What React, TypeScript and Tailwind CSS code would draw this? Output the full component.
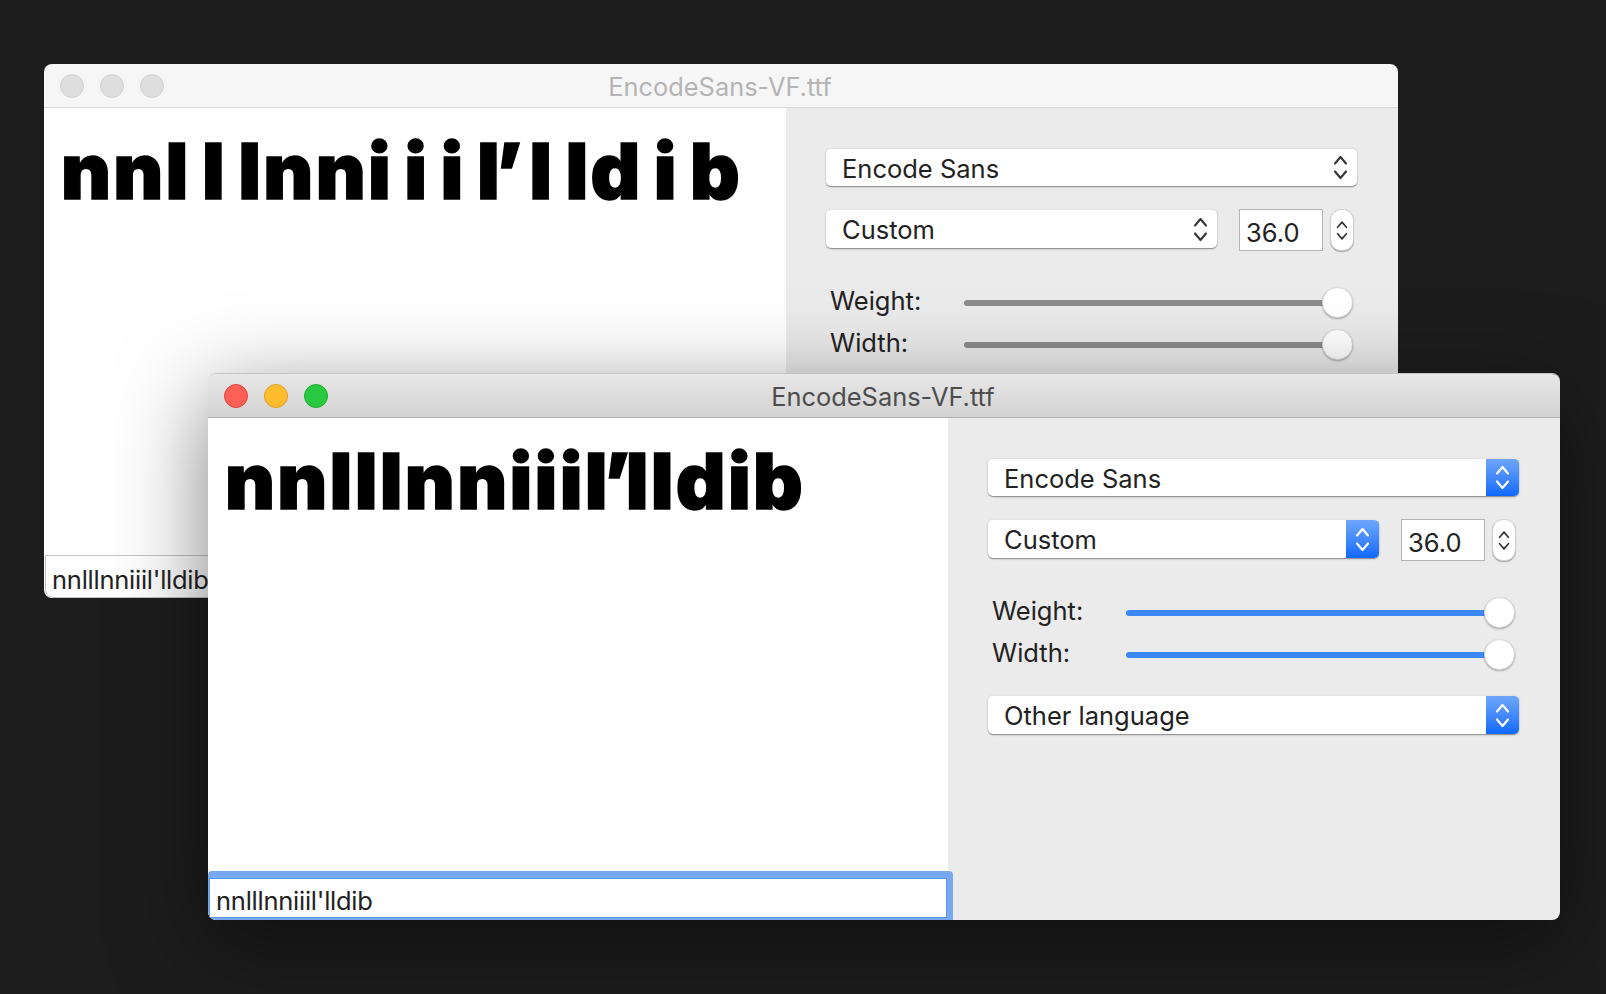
const uiFont = "font-['Inter','Liberation_Sans',sans-serif]";
const bigText = "pl-[17px] pt-[17px] text-[77px] leading-[92px] font-black text-black whitespace-nowrap tracking-[2.3px] [-webkit-text-stroke:1.5px_black]";

function UpDown({ color, size = "w-[15px] h-[27px]" }: { color: string; size?: string }) {
  return (
    <svg viewBox="0 0 15 27" className={size} fill="none" stroke={color} strokeWidth="2.2" strokeLinecap="round" strokeLinejoin="round">
      <path d="M2 9.5 L7.5 3 L13 9.5" />
      <path d="M2 17.5 L7.5 24 L13 17.5" />
    </svg>
  );
}

function Popup({ label, width, height, active }: { label: string; width: string; height: string; active: boolean }) {
  return (
    <div className={`${width} ${height} flex items-stretch bg-white rounded-[5px] overflow-hidden border-t border-t-[#e4e4e4] shadow-[0_1px_1.5px_rgba(0,0,0,0.45)]`}>
      <span className="flex-1 pl-4 pt-[2px] text-[25.5px] leading-[36px] text-[#222]">{label}</span>
      {active ? (
        <span className="w-[33px] flex items-center justify-center bg-gradient-to-b from-[#6fa6fb] to-[#0a68fe]">
          <UpDown color="#ffffff" />
        </span>
      ) : (
        <span className="w-[33px] flex items-center justify-center">
          <UpDown color="#3a3a3a" />
        </span>
      )}
    </div>
  );
}

function Slider({ label, active }: { label: string; active: boolean }) {
  return (
    <div className="flex items-center h-[31px]">
      <span className="w-[138px] pl-[4px] pb-[4px] text-[25.5px] leading-[27px] text-[#222]">{label}</span>
      <div className="relative flex-1 h-[31px] flex items-center">
        <div className={`w-full h-[6px] rounded-full ${active ? "bg-[#3b87f5]" : "bg-[#8c8c8c]"}`} />
        <div className="absolute right-0 top-0 w-[31px] h-[31px] rounded-full bg-white border border-[#dcdcdc] shadow-[0_1px_2px_rgba(0,0,0,0.3)]" />
      </div>
    </div>
  );
}

function Controls({ active, showLanguage }: { active: boolean; showLanguage: boolean }) {
  return (
    <div className="w-[612px] shrink-0 bg-[#ebebeb] pl-10 pt-[40px]">
      <Popup label="Encode Sans" width="w-[531px]" height="h-[38px]" active={active} />
      <div className="flex items-start mt-[23px]">
        <Popup label="Custom" width="w-[391px]" height="h-[39px]" active={active} />
        <div className="ml-[22px] w-[84px] h-[42px] bg-white border border-[#b4b4b4] pl-[6px] pt-[3px] text-[25.5px] leading-[40px] text-[#222]">36.0</div>
        <div className="ml-[7px] w-[24px] h-[42px] flex items-center justify-center bg-white rounded-[11px] border border-[#d0d0d0] shadow-[0_1px_1px_rgba(0,0,0,0.3)]">
          <UpDown color="#3a3a3a" size="w-[12px] h-[27px]" />
        </div>
      </div>
      <div className="w-[527px] mt-[36px] flex flex-col gap-[11px]">
        <Slider label="Weight:" active={active} />
        <Slider label="Width:" active={active} />
      </div>
      {showLanguage && (
        <div className="mt-[25px]">
          <Popup label="Other language" width="w-[531px]" height="h-[39px]" active={active} />
        </div>
      )}
    </div>
  );
}

function TitleBar({ active }: { active: boolean }) {
  return (
    <div className={`relative h-[44px] shrink-0 flex items-center justify-center border-b ${active ? "bg-gradient-to-b from-[#e8e8e8] to-[#d2d2d2] border-b-[#b0b0b0]" : "bg-[#f6f6f6] border-b-[#d8d8d8]"}`}>
      <div className="absolute left-[16px] top-[10px] flex gap-4">
        <span className={`w-6 h-6 rounded-full border ${active ? "bg-[#fe5f57] border-[#e0443e]" : "bg-[#dedede] border-[#d2d2d2]"}`} />
        <span className={`w-6 h-6 rounded-full border ${active ? "bg-[#febc2e] border-[#dfa023]" : "bg-[#dedede] border-[#d2d2d2]"}`} />
        <span className={`w-6 h-6 rounded-full border ${active ? "bg-[#28c840] border-[#1dad2b]" : "bg-[#dedede] border-[#d2d2d2]"}`} />
      </div>
      <span className={`pt-[2px] pr-[2px] text-[25.4px] leading-[30px] ${active ? "text-[#4d4d4d]" : "text-[#b4b4b4]"}`}>EncodeSans-VF.ttf</span>
    </div>
  );
}

// the quote sits tight against its neighbours in the preview font
function TightQuote() {
  return <span className="tracking-[-4.5px]">l’</span>;
}

export default function App() {
  return (
    <div className={`relative w-[1606px] h-[994px] overflow-hidden bg-[#1d1d1d] ${uiFont}`}>
      {/* background window */}
      <div className="absolute left-[44px] top-[64px] w-[1354px] h-[534px] flex flex-col rounded-[8px] overflow-hidden">
        <TitleBar active={false} />
        <div className="flex flex-1 min-h-0">
          <div className="w-[742px] bg-white flex flex-col justify-between">
            <div className={`${bigText} [word-spacing:-6.4px]`}>
              nnl l lnni i i <TightQuote /> l ld i b
            </div>
            <div className="h-[43px] ml-[1px] border border-[#c4c4c4] rounded-bl-[8px] bg-white pl-[6px] pt-[2px] text-[25.5px] tracking-[-0.25px] leading-[44px] text-[#222]">
              nnlllnniiil'lldib
            </div>
          </div>
          <Controls active={false} showLanguage={false} />
        </div>
      </div>

      {/* front window */}
      <div className="absolute left-[208px] top-[373px] w-[1352px] h-[547px] flex flex-col rounded-[8px] overflow-hidden border-t border-t-[#c4c4c4] shadow-[0_24px_90px_rgba(0,0,0,0.5)]">
        <TitleBar active={true} />
        <div className="flex flex-1 min-h-0">
          <div className="w-[740px] bg-white flex flex-col justify-between">
            <div className={bigText}>
              nnlllnniii<TightQuote />lldib
            </div>
            <div className="relative z-10 h-[49px] -mr-[5px] rounded-t-[4px] rounded-bl-[8px] bg-[#78a9f0] pt-[7px] pr-[6px] pl-[1px] pb-[2px]">
              <div className="h-full bg-white border border-[#5f95e6] pl-[6px] pt-[2px] text-[25.5px] tracking-[-0.25px] leading-[40px] text-[#222]">
                nnlllnniiil'lldib
              </div>
            </div>
          </div>
          <Controls active={true} showLanguage={true} />
        </div>
      </div>
    </div>
  );
}
